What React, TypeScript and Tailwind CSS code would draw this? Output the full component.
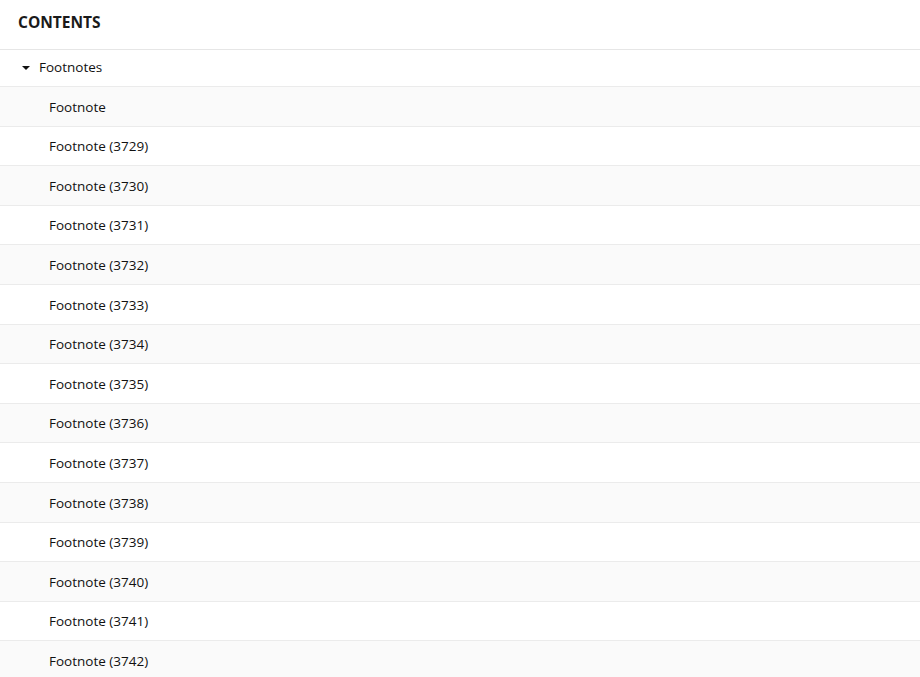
import React from "react";

const nums = [null, 3729, 3730, 3731, 3732, 3733, 3734, 3735, 3736, 3737, 3738, 3739, 3740, 3741, 3742];

export default function App() {
  return (
    <div className="w-[920px] h-[677px] overflow-hidden bg-white text-[#111] [font-family:'Open_Sans',sans-serif]">
      <div className="h-[50px] border-b border-[#e6e6e6] flex items-center pl-[18px]">
        <span className="text-[15.5px] font-bold text-[#1a1a1a] -mt-[4px]">CONTENTS</span>
      </div>
      <div className="h-[37px] border-b border-[#ebebeb] flex items-center pl-[21px]">
        <svg width="10" height="6" viewBox="0 0 10 6" className="mr-[8px]">
          <polygon points="1,1 9,1 5,5" fill="#111" />
        </svg>
        <span className="text-[13.5px] -mt-[2px]">Footnotes</span>
      </div>
      {nums.map((n, i) => (
        <div
          key={i}
          className={`h-[39.6px] border-b border-[#ebebeb] flex items-center pl-[49px] pt-[1px] ${i % 2 === 0 ? "bg-[#fafafa]" : "bg-white"}`}
        >
          <span className="text-[13.5px]">{n === null ? "Footnote" : `Footnote (${n})`}</span>
        </div>
      ))}
    </div>
  );
}
